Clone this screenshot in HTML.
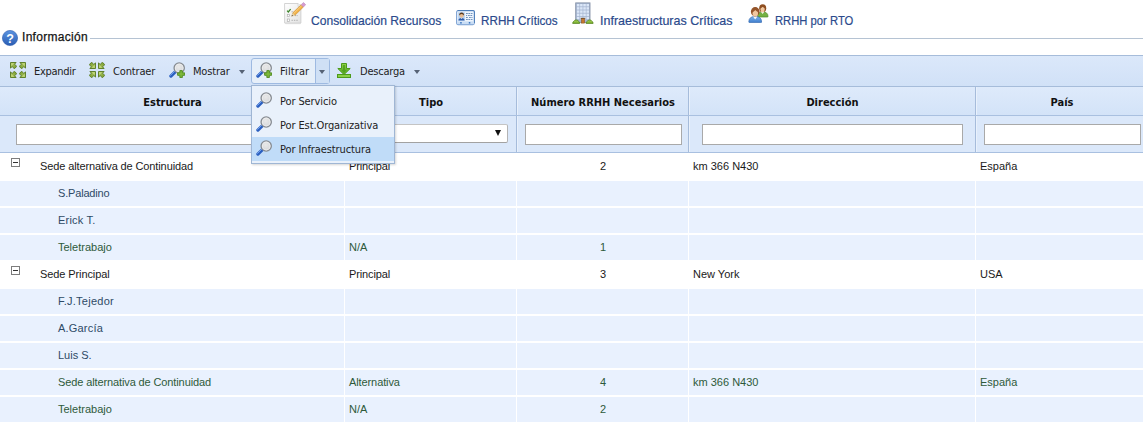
<!DOCTYPE html>
<html lang="es">
<head>
<meta charset="utf-8">
<title>Información</title>
<style>
html,body{margin:0;padding:0;background:#fff;}
body{width:1143px;height:422px;overflow:hidden;position:relative;font-family:"Liberation Sans",sans-serif;}
.abs{position:absolute;}
/* top nav */
.nav a{position:absolute;top:13px;font:13px "Liberation Sans",sans-serif;color:#2b4a8c;white-space:nowrap;text-decoration:none;line-height:16px;display:inline-block;transform-origin:0 50%;-webkit-text-stroke:.2px #2b4a8c;}
.nav svg{position:absolute;}
/* legend */
.legend{position:absolute;left:22px;top:29px;font:12px "Liberation Sans",sans-serif;color:#151515;line-height:16px;letter-spacing:.3px;-webkit-text-stroke:.25px #151515;white-space:nowrap;}
.lline{position:absolute;left:90px;top:38px;width:1053px;height:1px;background:#b5c3d3;}
/* toolbar */
.tb{position:absolute;left:0;top:55px;width:1143px;height:32px;background:linear-gradient(#dbe8fa,#d1e1f7);border-top:1px solid #a6bcda;border-bottom:1px solid #a6bcda;box-sizing:border-box;}
.tb .t{position:absolute;top:9px;font:11px "DejaVu Sans Condensed","Liberation Sans",sans-serif;color:#222;line-height:14px;white-space:nowrap;}
.tb svg{position:absolute;}
.arrow{position:absolute;width:0;height:0;border-left:3.5px solid transparent;border-right:3.5px solid transparent;border-top:4px solid #566275;}
/* grid */
.hd{position:absolute;left:0;top:87px;width:1143px;height:28px;background:linear-gradient(#deeafb,#d3e3f8);}
.hd div{position:absolute;top:0;height:28px;line-height:31px;text-align:center;padding-left:1px;font:bold 11px/31px "DejaVu Sans Condensed","Liberation Sans",sans-serif;color:#111;border-right:1px solid #a6bcdb;box-sizing:border-box;white-space:nowrap;box-shadow:1px 0 0 #e9f1fc;}
.fl{position:absolute;left:0;top:115px;width:1143px;height:38px;background:#dbe8fa;border-top:1px solid #a9c0e0;border-bottom:1px solid #a9c0e0;box-sizing:border-box;}
.fl .c{position:absolute;top:0;height:36px;border-right:1px solid #a6bcdb;box-sizing:border-box;box-shadow:1px 0 0 #e9f1fc;}
.fl .i{position:absolute;top:8px;height:21px;background:#fff;border:1px solid #a9a9a9;box-sizing:border-box;}
.row{position:absolute;left:0;width:1143px;height:25px;background:#e9f1fe;font:11px/25px "Liberation Sans",sans-serif;color:#2e4a66;}
.row.p{background:#fff;color:#1a1a1a;height:27px;line-height:27px;}
.row.g{color:#2e5a3a;}
.row span{position:absolute;top:0;white-space:nowrap;}
.vl{position:absolute;top:180px;width:1px;height:242px;background:#fff;}
.tg{position:absolute;left:11px;width:7px;height:7px;border:1px solid #7d7d7d;background:#fff;}
.tg:after{content:"";position:absolute;left:1px;top:3px;width:5px;height:1px;background:#333;}
/* menu */
.menu{position:absolute;left:251px;top:85px;width:144px;height:79px;background:#e9f1fb;border:1px solid #9fb6d4;box-sizing:border-box;box-shadow:1px 1px 2px rgba(0,0,0,.16);}
.menu .it{position:absolute;left:1px;width:140px;height:24px;font:11px/24px "DejaVu Sans Condensed","Liberation Sans",sans-serif;color:#222;white-space:nowrap;letter-spacing:-.1px}
.menu .it span{position:absolute;left:27px;top:1px}
.menu .it.sel{background:#c0dcf8;left:0;width:142px;height:24px;}
.menu svg{position:absolute;left:3px;top:3px}
</style>
</head>
<body>

<svg width="0" height="0" style="position:absolute">
<defs>
<linearGradient id="gg" x1="0" y1="0" x2="1" y2="1"><stop offset="0" stop-color="#b9d06c"/><stop offset="1" stop-color="#6f9426"/></linearGradient>
<linearGradient id="hb" x1="0" y1="0" x2="0" y2="1"><stop offset="0" stop-color="#5b93e0"/><stop offset="1" stop-color="#2a5db3"/></linearGradient>
<radialGradient id="gl" cx=".45" cy=".4" r=".7"><stop offset="0" stop-color="#e9e9e9"/><stop offset="1" stop-color="#cfd2d5"/></radialGradient>
<linearGradient id="dl" x1="0" y1="0" x2="0" y2="1"><stop offset="0" stop-color="#8fd04a"/><stop offset="1" stop-color="#55a81c"/></linearGradient>
<linearGradient id="hb2" x1="0" y1="0" x2="0" y2="1"><stop offset="0" stop-color="#7bb4ee"/><stop offset="1" stop-color="#3e7ccc"/></linearGradient>
<linearGradient id="pp" x1="0" y1="0" x2="1" y2="1"><stop offset="0" stop-color="#ffffff"/><stop offset="1" stop-color="#e2e2e2"/></linearGradient>
<symbol id="arw" viewBox="0 0 7 7"><path d="M.5 .5H6.100L4.600 2.150 6.750 4.400 4.400 6.750 2.150 4.600 .5 6.100Z" fill="url(#gg)" stroke="#56781f" stroke-width=".9" stroke-linejoin="round"/><path d="M1.300 1.300H4.200L1.300 4.200Z" fill="#c9dd86" opacity=".8"/></symbol>
<symbol id="mag" viewBox="0 0 16 16"><path d="M6.2 9.8L1.9 14.1" stroke="#2a5fc0" stroke-width="3.3" stroke-linecap="round"/><path d="M5.6 9.3L1.5 13.400" stroke="#7aa6ee" stroke-width="1" stroke-linecap="round"/><circle cx="10.2" cy="6" r="5.1" fill="url(#gl)" stroke="#878c92" stroke-width="1.4"/><circle cx="10.2" cy="6" r="4" fill="none" stroke="#f2f2f2" stroke-width=".7"/></symbol>
<symbol id="plus" viewBox="0 0 8 8"><path d="M2.8 .6h2.4v2.2h2.2v2.4H5.2v2.2H2.8V5.2H.6V2.8h2.2Z" fill="#7db83a" stroke="#4e8a1e" stroke-width=".9" stroke-linejoin="round"/></symbol>
</defs>
</svg>
<div class="nav">

<svg style="left:284px;top:2px" width="22" height="23" viewBox="0 0 22 23">
 <rect x="1" y="2.200" width="16" height="20" rx="1" fill="#d9d9d9" opacity=".6"/>
 <path d="M.6 1.500h13.400l2.900 2.900v16.600h-16.300z" fill="url(#pp)" stroke="#cfcfcf" stroke-width=".9"/>
 <path d="M14 1.500v2.900h2.900" fill="#f4f4f4" stroke="#cfcfcf" stroke-width=".7"/>
 <path d="M3.100 8.700l1.200 1.300 2.300-2.900" fill="none" stroke="#3b8429" stroke-width="1.250"/>
 <rect x="3.300" y="12.300" width="2.300" height="2.300" fill="#fff" stroke="#b0b0b0" stroke-width=".7"/>
 <rect x="3.300" y="17" width="2.300" height="2.500" fill="#fff" stroke="#b0b0b0" stroke-width=".7"/>
 <path d="M7.500 9.800h2.500M11 13.600h3M7.500 18.300h6.500" stroke="#a9a9a9" stroke-width=".9" stroke-dasharray="1.400 1"/>
 <path d="M8.620 11.060L17.180 2.690 19.420 4.970 10.860 13.340z" fill="#f2b146" stroke="#c98c30" stroke-width=".6"/>
 <path d="M9.400 11.800L17.900 3.500" stroke="#f9d48a" stroke-width=".9"/>
 <path d="M7.600 14.300L8.620 11.060 10.860 13.340z" fill="#f0d8ad" stroke="#c9a86a" stroke-width=".4"/>
 <path d="M7.600 14.300l.45-1.400 1 .95z" fill="#3a3a3a"/>
 <path d="M17.180 2.690L19.500 .460 21.700 2.740 19.420 4.970z" fill="#d79bd0" stroke="#b57fb0" stroke-width=".5"/>
</svg>
<svg style="left:456px;top:10px" width="19" height="16" viewBox="0 0 19 16">
 <rect x=".6" y=".6" width="17.800" height="14" rx="1.500" fill="#eef5fd" stroke="#7ea3d4" stroke-width="1.100"/>
 <path d="M1.600 .500h15.800q1 .1 1 1v11.500" fill="none" stroke="#4c7db8" stroke-width="1"/>
 <rect x="1.400" y="11.400" width="16.200" height="2.800" fill="#c9ddf4"/>
 <rect x="4.200" y="12" width="1.500" height="1.600" fill="#3f78c0"/><rect x="12.800" y="12" width="1.500" height="1.600" fill="#3f78c0"/>
 <rect x="2.200" y="2.300" width="6.600" height="8.300" fill="#b5d0ee"/>
 <path d="M2.400 10.600q0-2.700 3.100-2.700t3.100 2.700z" fill="#2d5cab"/>
 <path d="M4.600 8l.9 1 .9-1z" fill="#e8eef8"/>
 <circle cx="5.600" cy="5.600" r="2.100" fill="#e8bc92"/>
 <path d="M3.200 5.600q-.2-3.100 2.400-3.100t2.400 3.100q-.9-1.600-2.400-1.600t-2.400 1.600z" fill="#5a3a1e"/>
 <path d="M10 3.500h6.500M10 5.500h1.200M12 5.500h4.500M10 7.500h2.200M13 7.500h3.500M10 9.500h6.500" stroke="#6f92bd" stroke-width="1" stroke-dasharray="1.800 .6"/>
</svg>
<svg style="left:572px;top:2px" width="22" height="23" viewBox="0 0 22 23">
 <rect x="3.700" y=".9" width="14.300" height="19.500" fill="#a7b7d2" stroke="#8793a8" stroke-width=".9"/>
 <g fill="#dbe7f8"><rect x="4.90" y="2.00" width="2.500" height="2.400"/><rect x="8.10" y="2.00" width="2.500" height="2.400"/><rect x="11.30" y="2.00" width="2.500" height="2.400"/><rect x="14.50" y="2.00" width="2.500" height="2.400"/><rect x="4.90" y="5.20" width="2.500" height="2.400"/><rect x="8.10" y="5.20" width="2.500" height="2.400"/><rect x="11.30" y="5.20" width="2.500" height="2.400"/><rect x="14.50" y="5.20" width="2.500" height="2.400"/><rect x="4.90" y="8.40" width="2.500" height="2.400"/><rect x="8.10" y="8.40" width="2.500" height="2.400"/><rect x="11.30" y="8.40" width="2.500" height="2.400"/><rect x="14.50" y="8.40" width="2.500" height="2.400"/><rect x="4.90" y="11.60" width="2.500" height="2.400"/><rect x="8.10" y="11.60" width="2.500" height="2.400"/><rect x="11.30" y="11.60" width="2.500" height="2.400"/><rect x="14.50" y="11.60" width="2.500" height="2.400"/><rect x="4.90" y="14.80" width="2.500" height="2.400"/><rect x="8.10" y="14.80" width="2.500" height="2.400"/><rect x="11.30" y="14.80" width="2.500" height="2.400"/><rect x="14.50" y="14.80" width="2.500" height="2.400"/></g>
 <rect x="9.500" y="16.300" width="3" height="4.800" fill="#c9782c" stroke="#8c5520" stroke-width=".6"/>
 <path d="M8.600 16.300h4.800" stroke="#6b4a2a" stroke-width=".8"/>
 <path d="M.7 21.500q-.2-1.800 1.300-2.300 .6-1.400 2.200-1.300 1.700-.1 2.200 1.300 1.500.5 1.300 2.300z" fill="#7fb232" stroke="#55821f" stroke-width=".7"/>
 <path d="M14.100 21.500q-.2-1.800 1.300-2.300 .6-1.400 2.200-1.300 1.700-.1 2.200 1.300 1.500.5 1.300 2.300z" fill="#7fb232" stroke="#55821f" stroke-width=".7"/>
 <path d="M2.300 19.600q1.800-1.200 3.800 0M15.700 19.600q1.800-1.200 3.800 0" fill="none" stroke="#a9d15a" stroke-width=".7"/>
</svg>
<svg style="left:748px;top:3px" width="21" height="20" viewBox="0 0 21 20">
 <path d="M9.200 13.500q0-4.600 5.400-4.600t5.400 4.600q0 .5-.6.500h-9.600q-.6 0-.6-.5z" fill="#74b043" stroke="#4f8a2a" stroke-width=".7"/>
 <path d="M13 9.100l1.600 2 1.600-2z" fill="#f4f4ee"/>
 <ellipse cx="14.700" cy="5.200" rx="3.500" ry="3.900" fill="#8f4f22"/>
 <ellipse cx="14.600" cy="6.500" rx="2.100" ry="2.700" fill="#f0c79f"/>
 <path d="M11.600 5.600q1.600-.2 3-1.800 1.200 1.400 3.200 1.600-.2-3.400-3.100-3.400t-3.100 3.600z" fill="#8f4f22"/>
 <path d="M.8 19q0-5.600 6.400-5.600t6.400 5.600q0 .6-.8.600h-11.200q-.8 0-.8-.6z" fill="url(#hb2)" stroke="#3469b0" stroke-width=".7"/>
 <path d="M5 13.500l2.200 2.900 2.200-2.900z" fill="#f4f6fa"/>
 <ellipse cx="7.200" cy="8.700" rx="4.300" ry="4.700" fill="#94542a"/>
 <ellipse cx="7.300" cy="10.300" rx="2.700" ry="3.300" fill="#f0c79f"/>
 <path d="M3.500 9.400q2-.2 3.800-2.400 1.400 2 4 2.200-.2-4.400-3.900-4.400t-3.900 4.600z" fill="#94542a"/>
</svg>
<a style="left:311px;transform:scaleX(.93)">Consolidación Recursos</a>
<a style="left:481px;transform:scaleX(.9)">RRHH Críticos</a>
<a style="left:600px;transform:scaleX(.96)">Infraestructuras Críticas</a>
<a style="left:775px;transform:scaleX(.865)">RRHH por RTO</a>
</div>
<svg class="abs" style="left:2px;top:30px" width="16" height="16" viewBox="0 0 16 16"><circle cx="8" cy="8" r="7.6" fill="url(#hb)" stroke="#2c5cae" stroke-width=".6"/><text x="8" y="12.800" text-anchor="middle" font-family="Liberation Sans, sans-serif" font-weight="bold" font-size="12.5" fill="#fff">?</text></svg>
<div class="legend">Información</div>
<div class="lline"></div>

<div class="tb">

 <svg style="left:10px;top:6px" width="16" height="16" viewBox="0 0 16 16"><use href="#arw" x="0" y="0" width="7" height="7"/><use href="#arw" width="7" height="7" transform="translate(16,0) scale(-1,1)"/><use href="#arw" width="7" height="7" transform="translate(0,16) scale(1,-1)"/><use href="#arw" width="7" height="7" transform="translate(16,16) scale(-1,-1)"/></svg>
 <svg style="left:89px;top:6px" width="16" height="16" viewBox="0 0 16 16"><use href="#arw" width="7" height="7" transform="translate(7,7) scale(-1,-1)"/><use href="#arw" width="7" height="7" transform="translate(9,7) scale(1,-1)"/><use href="#arw" width="7" height="7" transform="translate(7,9) scale(-1,1)"/><use href="#arw" width="7" height="7" transform="translate(9,9)"/></svg>
 <svg style="left:169px;top:6px" width="16" height="16" viewBox="0 0 16 16"><use href="#mag" width="16" height="16"/><use href="#plus" x="8" y="8" width="8.200" height="8.200"/></svg>
 <span class="t" style="left:34px;letter-spacing:-.3px">Expandir</span>
 <span class="t" style="left:113px;letter-spacing:-.16px">Contraer</span>
 <span class="t" style="left:193px;letter-spacing:-.17px">Mostrar</span>
 <i class="arrow" style="left:239px;top:14px"></i>
 <div class="abs" style="left:251px;top:2px;width:79px;height:26px;border:1px solid #9ebae1;border-radius:3px;box-sizing:border-box;background:#e6eff9"></div>
 <div class="abs" style="left:315px;top:3px;width:14px;height:24px;border-left:1px solid #9ebae1;background:#cfe0f5;box-sizing:border-box"></div>
 <svg style="left:256px;top:6px" width="16" height="16" viewBox="0 0 16 16"><use href="#mag" width="16" height="16"/><use href="#plus" x="8" y="8" width="8.200" height="8.200"/></svg>
 <span class="t" style="left:280px;letter-spacing:.12px">Filtrar</span>
 <i class="arrow" style="left:318.5px;top:14px"></i>
 <svg style="left:337px;top:7px" width="14" height="15" viewBox="0 0 14 15"><path d="M4.5 .5h5v5h3.7L7 11.6 .8 5.5h3.7Z" fill="url(#dl)" stroke="#4c9a1a" stroke-width="1" stroke-linejoin="round"/><path d="M6 2h2v4.800h1.900L7 9.700 4.100 6.800H6z" fill="#4a9a1a" opacity=".75"/><rect x=".5" y="11.5" width="13" height="3" fill="#8ad045" stroke="#4c9a1a"/></svg>
 <span class="t" style="left:360px;letter-spacing:-.22px">Descarga</span>
 <i class="arrow" style="left:414px;top:14px"></i>
</div>

<div class="hd">
 <div style="left:0;width:345px">Estructura</div>
 <div style="left:345px;width:172px">Tipo</div>
 <div style="left:517px;width:172px">Número RRHH Necesarios</div>
 <div style="left:689px;width:287px">Dirección</div>
 <div style="left:976px;width:172px">País</div>
</div>
<div class="fl">
 <div class="c" style="left:0;width:345px"></div>
 <div class="c" style="left:345px;width:172px"></div>
 <div class="c" style="left:517px;width:172px"></div>
 <div class="c" style="left:689px;width:287px"></div>
 <div class="i" style="left:16px;width:320px"></div>
 <div class="i" style="left:353px;width:155px;height:19px;border-radius:2px;border-color:#c4c4c4 #b4b4b4 #a2a2a2 #c4c4c4"></div>
 <div class="i" style="left:525px;width:157px"></div>
 <div class="i" style="left:702px;width:261px"></div>
 <div class="i" style="left:984px;width:157px"></div>
 <i class="abs" style="left:495px;top:14px;width:0;height:0;border-left:3.5px solid transparent;border-right:3.5px solid transparent;border-top:6px solid #111"></i>
</div>

<div class="row p" style="top:153px"><i class="tg" style="top:5px"></i><span style="left:40px;letter-spacing:-0.116px">Sede alternativa de Continuidad</span><span style="left:349px;letter-spacing:-0.13px">Principal</span><span style="left:600px">2</span><span style="left:693px">km 366 N430</span><span style="left:980px">España</span></div>
<div class="row" style="top:181px"><span style="left:58px;letter-spacing:-0.18px">S.Paladino</span></div>
<div class="row" style="top:208px"><span style="left:58px;letter-spacing:0.21px">Erick T.</span></div>
<div class="row g" style="top:235px"><span style="left:58px">Teletrabajo</span><span style="left:349px">N/A</span><span style="left:600px">1</span></div>
<div class="row p" style="top:261px"><i class="tg" style="top:5px"></i><span style="left:40px;letter-spacing:-0.1px">Sede Principal</span><span style="left:349px;letter-spacing:-0.13px">Principal</span><span style="left:600px">3</span><span style="left:693px">New York</span><span style="left:980px">USA</span></div>
<div class="row" style="top:289px"><span style="left:58px;letter-spacing:0.25px">F.J.Tejedor</span></div>
<div class="row" style="top:316px"><span style="left:58px;letter-spacing:0.2px">A.García</span></div>
<div class="row" style="top:343px"><span style="left:58px">Luis S.</span></div>
<div class="row g" style="top:370px"><span style="left:58px;letter-spacing:-0.116px">Sede alternativa de Continuidad</span><span style="left:349px;letter-spacing:-0.1px">Alternativa</span><span style="left:600px">4</span><span style="left:693px">km 366 N430</span><span style="left:980px">España</span></div>
<div class="row g" style="top:397px"><span style="left:58px">Teletrabajo</span><span style="left:349px">N/A</span><span style="left:600px">2</span></div>
<i class="vl" style="left:344px"></i><i class="vl" style="left:516px"></i><i class="vl" style="left:688px"></i><i class="vl" style="left:975px"></i>

<div class="menu">
 <div class="it" style="top:3px"><svg width="16" height="16" viewBox="0 0 16 16"><use href="#mag" width="16" height="16"/></svg><span>Por Servicio</span></div>
 <div class="it" style="top:27px"><svg width="16" height="16" viewBox="0 0 16 16"><use href="#mag" width="16" height="16"/></svg><span>Por Est.Organizativa</span></div>
 <div class="it sel" style="top:51px"><svg style="left:4px;top:3px" width="16" height="16" viewBox="0 0 16 16"><use href="#mag" width="16" height="16"/></svg><span style="left:28px;top:1px">Por Infraestructura</span></div>
</div>
</body>
</html>
